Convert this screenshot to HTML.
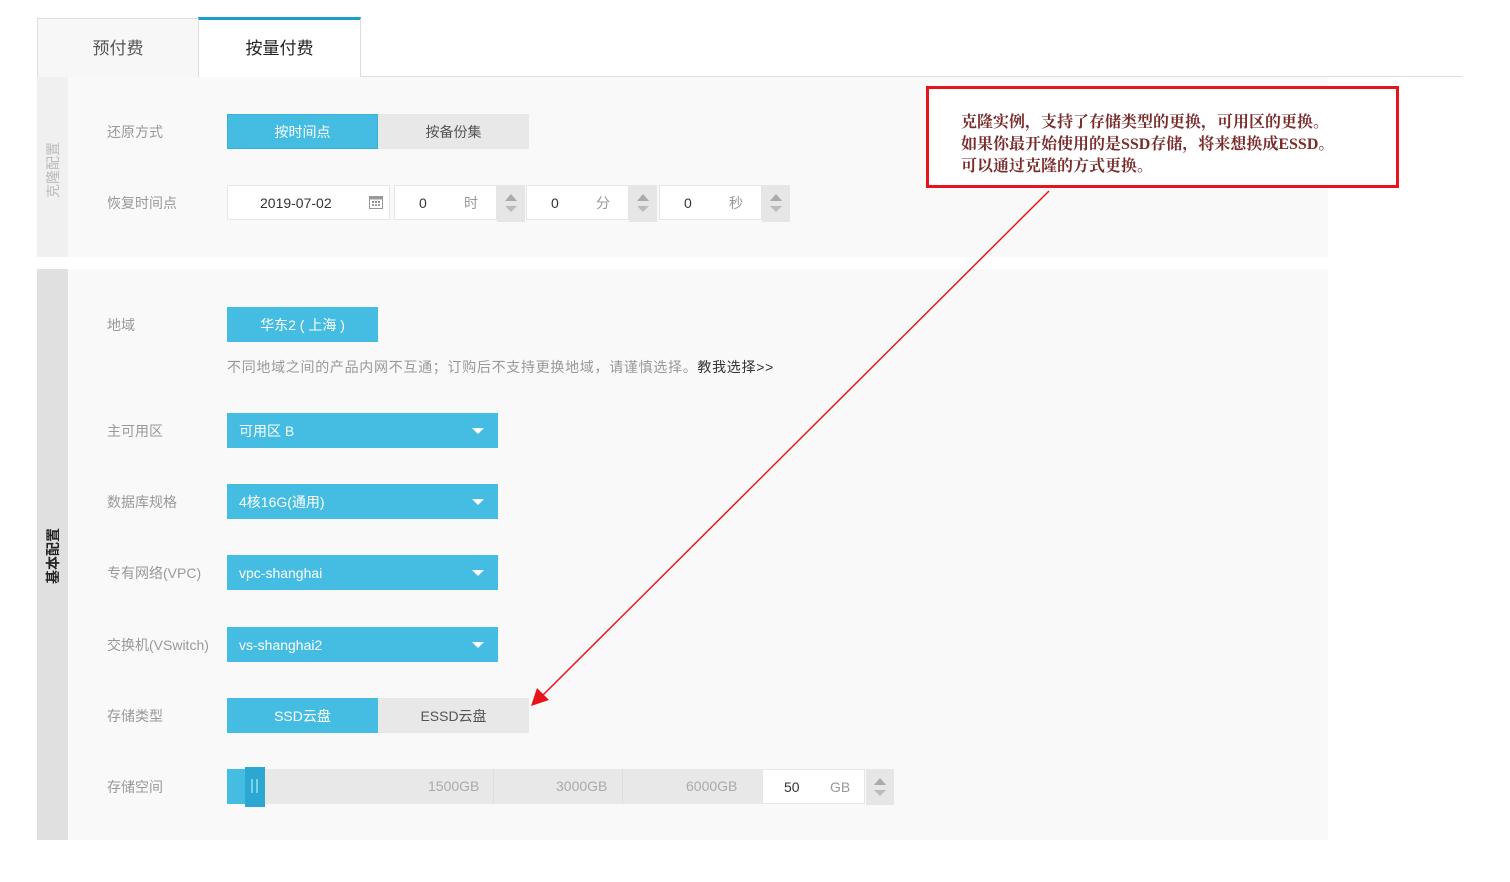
<!DOCTYPE html>
<html><head><meta charset="utf-8"><style>
*{margin:0;padding:0;box-sizing:border-box}
body{width:1510px;height:882px;background:#fff;position:relative;overflow:hidden;font-family:"Liberation Sans","Noto Sans CJK SC",sans-serif;font-size:14px;color:#333}
.a{position:absolute}
.lbl{position:absolute;left:107px;color:#999;font-size:14px;line-height:20px;margin-top:1px}
.btn{position:absolute;height:35px;line-height:36px;text-align:center;font-size:14px}
.blue{background:#45bde3;color:#fff}
.gray{background:#e8e8e8;color:#555}
.dd{position:absolute;left:227px;width:271px;height:35px;line-height:36px;background:#45bde3;color:#fff;padding-left:12px;font-size:14px}
.dd:after{content:"";position:absolute;right:14px;top:15px;border-left:6px solid transparent;border-right:6px solid transparent;border-top:6px solid #fff}
.inp{position:absolute;background:#fff;border:1px solid #e6e6e6;height:35px;line-height:34px;font-size:14px;color:#333}
.sp{position:absolute;background:#e6e6e6;width:28px;height:37px}
.sp:before{content:"";position:absolute;left:8px;top:9px;border-left:6px solid transparent;border-right:6px solid transparent;border-bottom:7px solid #aaa}
.sp:after{content:"";position:absolute;left:8px;top:21px;border-left:6px solid transparent;border-right:6px solid transparent;border-top:6px solid #bbb}
.vt{position:absolute;transform:rotate(-90deg);white-space:nowrap;font-size:14px}
</style></head><body>
<div class="a" style="left:37px;top:76px;width:1425px;height:1px;background:#ddd"></div>
<div class="a" style="left:37px;top:18px;width:162px;height:59px;background:#f7f7f7;border:1px solid #ddd;border-bottom:none;text-align:center;line-height:60px;font-size:17px;color:#555">预付费</div>
<div class="a" style="left:198px;top:17px;width:163px;height:60px;background:#fff;border:1px solid #ddd;border-top:3px solid #1a9dc9;border-bottom:none;text-align:center;line-height:58px;font-size:17px;color:#222">按量付费</div>

<div class="a" style="left:37px;top:77px;width:1291px;height:180px;background:#f9f9f9"></div>
<div class="a" style="left:37px;top:77px;width:31px;height:180px;background:#f0f0f0"></div>
<div class="vt" style="left:25px;top:160px;color:#bbb">克隆配置</div>
<div class="lbl" style="top:121px">还原方式</div>
<div class="btn blue" style="left:227px;top:114px;width:151px;border:1px solid #3aaed6;line-height:34px">按时间点</div>
<div class="btn gray" style="left:378px;top:114px;width:151px">按备份集</div>
<div class="lbl" style="top:192px">恢复时间点</div>
<div class="inp" style="left:227px;top:185px;width:163px;padding-left:32px">2019-07-02
<svg class="a" style="left:141px;top:9px" width="14" height="14" viewBox="0 0 14 14"><rect x="0.5" y="1.5" width="13" height="12" fill="#fff" stroke="#999"/><rect x="0.5" y="1.5" width="13" height="3" fill="#999"/><g fill="#999"><rect x="3" y="6" width="2" height="2"/><rect x="6" y="6" width="2" height="2"/><rect x="9" y="6" width="2" height="2"/><rect x="3" y="9" width="2" height="2"/><rect x="6" y="9" width="2" height="2"/><rect x="9" y="9" width="2" height="2"/></g></svg></div>
<div class="inp" style="left:394px;top:185px;width:103px;padding-left:24px">0<span class="a" style="left:69px;color:#999">时</span></div>
<div class="sp" style="left:497px;top:185px"></div>
<div class="inp" style="left:526px;top:185px;width:103px;padding-left:24px">0<span class="a" style="left:69px;color:#999">分</span></div>
<div class="sp" style="left:629px;top:185px"></div>
<div class="inp" style="left:659px;top:185px;width:103px;padding-left:24px">0<span class="a" style="left:69px;color:#999">秒</span></div>
<div class="sp" style="left:762px;top:185px"></div>

<div class="a" style="left:37px;top:269px;width:1291px;height:571px;background:#f9f9f9"></div>
<div class="a" style="left:37px;top:269px;width:31px;height:571px;background:#e0e0e0"></div>
<div class="vt" style="left:25px;top:546px;color:#222;font-weight:bold">基本配置</div>

<div class="lbl" style="top:314px">地域</div>
<div class="btn blue" style="left:227px;top:307px;width:151px">华东2 ( 上海 )</div>
<div class="a" style="left:227px;top:357px;color:#999;font-size:14px;line-height:20px;letter-spacing:0.7px;white-space:nowrap">不同地域之间的产品内网不互通；订购后不支持更换地域，请谨慎选择。<span style="color:#333">教我选择&gt;&gt;</span></div>

<div class="lbl" style="top:420px">主可用区</div>
<div class="dd" style="top:413px">可用区 B</div>
<div class="lbl" style="top:491px">数据库规格</div>
<div class="dd" style="top:484px">4核16G(通用)</div>
<div class="lbl" style="top:562px">专有网络(VPC)</div>
<div class="dd" style="top:555px">vpc-shanghai</div>
<div class="lbl" style="top:634px">交换机(VSwitch)</div>
<div class="dd" style="top:627px">vs-shanghai2</div>

<div class="lbl" style="top:705px">存储类型</div>
<div class="btn blue" style="left:227px;top:698px;width:151px">SSD云盘</div>
<div class="btn gray" style="left:378px;top:698px;width:151px">ESSD云盘</div>

<div class="lbl" style="top:776px">存储空间</div>
<div class="a" style="left:227px;top:769px;width:536px;height:35px;background:#e8e8e8"></div>
<div class="a" style="left:227px;top:769px;width:20px;height:35px;background:#45bde3"></div>
<div class="a" style="left:245px;top:767px;width:20px;height:40px;background:#2aa8d2"></div>
<div class="a" style="left:251px;top:779px;width:2px;height:14px;background:#7fd0ea"></div>
<div class="a" style="left:256px;top:779px;width:2px;height:14px;background:#7fd0ea"></div>
<div class="a" style="left:493px;top:769px;width:1px;height:35px;background:#ddd"></div>
<div class="a" style="left:622px;top:769px;width:1px;height:35px;background:#ddd"></div>
<div class="a" style="left:428px;top:778px;color:#aaa">1500GB</div>
<div class="a" style="left:556px;top:778px;color:#aaa">3000GB</div>
<div class="a" style="left:686px;top:778px;color:#aaa">6000GB</div>
<div class="inp" style="left:762px;top:769px;width:103px;padding-left:21px">50<span class="a" style="left:67px;color:#999">GB</span></div>
<div class="sp" style="left:866px;top:769px;height:36px"></div>

<div class="a" style="left:926px;top:86px;width:473px;height:102px;border:3px solid #e8141c;background:#fff"></div>
<div class="a" style="left:961px;top:112px;color:#7a2c2c;font-family:'Liberation Serif','Noto Serif CJK SC',serif;font-weight:bold;font-size:16px;line-height:22px;white-space:nowrap">克隆实例，支持了存储类型的更换，可用区的更换。<br>如果你最开始使用的是SSD存储，将来想换成ESSD。<br>可以通过克隆的方式更换。</div>
<svg class="a" style="left:0;top:0" width="1510" height="882"><line x1="1049" y1="191" x2="540" y2="698" stroke="#e8141c" stroke-width="1.5"/><polygon points="531,706 537,688 549,700" fill="#e8141c"/></svg>
</body></html>
